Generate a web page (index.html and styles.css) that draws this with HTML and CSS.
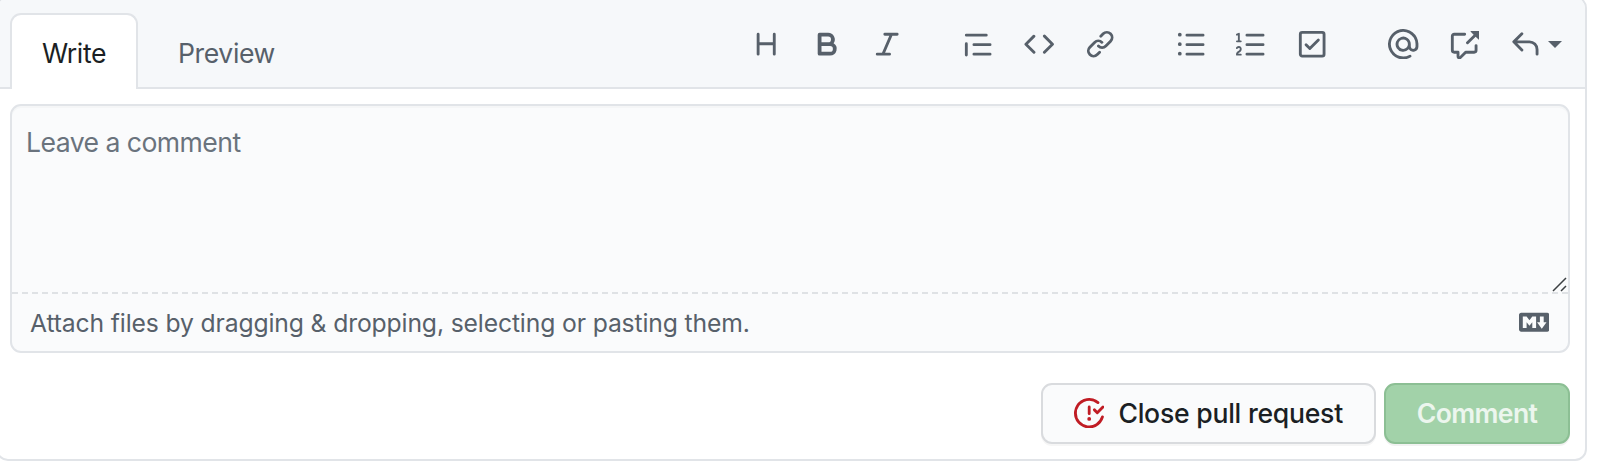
FILE: index.html
```html
<!DOCTYPE html>
<html lang="en">
<head>
<meta charset="utf-8">
<title>Leave a comment</title>
<link rel="stylesheet" href="styles.css">
</head>
<body>
<form class="comment-box">
  <header class="box-header">
    <nav class="tabs">
      <a class="tab tab-active"><span class="write-label">Write</span></a>
      <a class="tab"><span class="preview-label">Preview</span></a>
    </nav>
    <div class="toolbar">
      <div class="tool-group">
        <svg class="icon" viewBox="0 0 16 16"><path d="M3.75 2a.75.75 0 01.75.75V7h7V2.75a.75.75 0 011.5 0v10.5a.75.75 0 01-1.5 0V8.5h-7v4.75a.75.75 0 01-1.5 0V2.75A.75.75 0 013.75 2z"/></svg>
        <svg class="icon" viewBox="0 0 16 16"><path d="M4 2a1 1 0 00-1 1v10a1 1 0 001 1h5.5a3.5 3.5 0 001.852-6.47A3.5 3.5 0 008.5 2H4zm4.5 5a1.5 1.5 0 100-3H5v3h3.5zM5 9v3h4.5a1.5 1.5 0 000-3H5z"/></svg>
        <svg class="icon" viewBox="0 0 16 16"><path d="M6 2.75A.75.75 0 016.75 2h6.5a.75.75 0 010 1.5h-2.505l-3.858 9H9.25a.75.75 0 010 1.5h-6.5a.75.75 0 010-1.5h2.505l3.858-9H6.75A.75.75 0 016 2.75z"/></svg>
      </div>
      <div class="tool-group">
        <svg class="icon" viewBox="0 0 16 16"><path d="M1.75 2.5a.75.75 0 000 1.5h10.5a.75.75 0 000-1.5H1.75zm4 5a.75.75 0 000 1.5h8.5a.75.75 0 000-1.5h-8.5zm0 5a.75.75 0 000 1.5h8.5a.75.75 0 000-1.5h-8.5zM2.5 7.75a.75.75 0 00-1.5 0v6a.75.75 0 001.5 0v-6z"/></svg>
        <svg class="icon" viewBox="0 0 16 16"><path d="M4.72 3.22a.75.75 0 011.06 1.06L2.06 8l3.72 3.72a.75.75 0 11-1.06 1.06L.47 8.53a.75.75 0 010-1.06l4.25-4.25zm6.56 0a.75.75 0 10-1.06 1.06L13.94 8l-3.72 3.72a.75.75 0 101.06 1.06l4.25-4.25a.75.75 0 000-1.06l-4.25-4.25z"/></svg>
        <svg class="icon" viewBox="0 0 16 16"><path d="M7.775 3.275a.75.75 0 001.06 1.06l1.25-1.25a2 2 0 112.83 2.83l-2.5 2.5a2 2 0 01-2.83 0 .75.75 0 00-1.06 1.06 3.5 3.5 0 004.95 0l2.5-2.5a3.5 3.5 0 00-4.95-4.95l-1.25 1.25zm-4.69 9.64a2 2 0 010-2.83l2.5-2.5a2 2 0 012.83 0 .75.75 0 001.06-1.06 3.5 3.5 0 00-4.95 0l-2.5 2.5a3.5 3.5 0 004.95 4.95l1.25-1.25a.75.75 0 00-1.06-1.06l-1.25 1.25a2 2 0 01-2.83 0z"/></svg>
      </div>
      <div class="tool-group">
        <svg class="icon" viewBox="0 0 16 16"><path d="M2 4a1 1 0 100-2 1 1 0 000 2zm3.75-1.5a.75.75 0 000 1.5h8.5a.75.75 0 000-1.5h-8.5zm0 5a.75.75 0 000 1.5h8.5a.75.75 0 000-1.5h-8.5zm0 5a.75.75 0 000 1.5h8.5a.75.75 0 000-1.5h-8.5zM3 8a1 1 0 11-2 0 1 1 0 012 0zm-1 6a1 1 0 100-2 1 1 0 000 2z"/></svg>
        <svg class="icon" viewBox="0 0 16 16"><path d="M2.003 2.5a.5.5 0 00-.723-.447l-1.003.5a.5.5 0 00.446.895l.28-.14V6H.5a.5.5 0 000 1h2.006a.5.5 0 100-1h-.503V2.5zM5 3.25a.75.75 0 01.75-.75h8.5a.75.75 0 010 1.5h-8.5A.75.75 0 015 3.25zm0 5a.75.75 0 01.75-.75h8.5a.75.75 0 010 1.5h-8.5A.75.75 0 015 8.25zm0 5a.75.75 0 01.75-.75h8.5a.75.75 0 010 1.5h-8.5a.75.75 0 01-.75-.75zM.924 10.32l.003-.004a.851.851 0 01.144-.153A.66.66 0 011.5 10c.195 0 .306.068.374.146a.57.57 0 01.128.376c0 .453-.269.682-.8 1.078l-.035.025C.692 11.98 0 12.495 0 13.5a.5.5 0 00.5.5h2.003a.5.5 0 000-1H1.146c.132-.197.351-.372.654-.597l.047-.035c.47-.35 1.156-.858 1.156-1.845 0-.365-.118-.744-.377-1.038-.268-.303-.658-.484-1.126-.484-.48 0-.84.202-1.068.392a1.858 1.858 0 00-.348.384l-.007.011-.002.004-.001.002-.001.001a.5.5 0 00.851.525z"/></svg>
        <svg class="icon" viewBox="0 0 16 16"><path d="M2.5 2.75a.25.25 0 01.25-.25h10.5a.25.25 0 01.25.25v10.5a.25.25 0 01-.25.25H2.75a.25.25 0 01-.25-.25V2.75zM2.75 1A1.75 1.75 0 001 2.75v10.5c0 .966.784 1.75 1.75 1.75h10.5A1.75 1.75 0 0015 13.25V2.75A1.75 1.75 0 0013.25 1H2.75zm9.03 5.28a.75.75 0 00-1.06-1.06L6.75 9.19 5.28 7.72a.75.75 0 00-1.06 1.06l2 2a.75.75 0 001.06 0l4.5-4.5z"/></svg>
      </div>
      <div class="tool-group">
        <svg class="icon" viewBox="0 0 16 16"><path d="M4.75 2.37a6.5 6.5 0 006.5 11.26.75.75 0 01.75 1.298 8 8 0 113.994-7.273.754.754 0 01.006.095v1.5a2.75 2.75 0 01-5.072 1.475A4 4 0 1112 8v1.25a1.25 1.25 0 002.5 0V7.867a6.5 6.5 0 00-9.75-5.496V2.37zM10.5 8a2.5 2.5 0 10-5 0 2.5 2.5 0 005 0z"/></svg>
        <svg class="icon" viewBox="0 0 16 16"><path d="M16 1.25v4.146a.25.25 0 01-.427.177L14.03 4.03l-3.75 3.75a.75.75 0 11-1.06-1.06l3.75-3.75-1.543-1.543A.25.25 0 0111.604 1h4.146a.25.25 0 01.25.25zM2.75 3.5a.25.25 0 00-.25.25v7.5c0 .138.112.25.25.25h2a.75.75 0 01.75.75v2.19l2.72-2.72a.75.75 0 01.53-.22h4.5a.25.25 0 00.25-.25v-2.5a.75.75 0 111.5 0v2.5A1.75 1.75 0 0113.25 13H9.06l-2.573 2.573A1.457 1.457 0 014 14.543V13H2.75A1.75 1.75 0 011 11.25v-7.5C1 2.784 1.784 2 2.75 2h5.5a.75.75 0 010 1.5h-5.5z"/></svg>
        <div class="reply">
          <svg class="icon" viewBox="0 0 16 16"><path d="M6.78 1.97a.75.75 0 010 1.06L3.81 6h6.44A4.75 4.75 0 0115 10.75v2.5a.75.75 0 01-1.5 0v-2.5a3.25 3.25 0 00-3.25-3.25H3.81l2.97 2.97a.75.75 0 11-1.06 1.06L1.47 7.28a.75.75 0 010-1.06l4.25-4.25a.75.75 0 011.06 0z"/></svg>
          <span class="caret"></span>
        </div>
      </div>
    </div>
  </header>

  <div class="editor">
    <div class="input-area">
      <span class="placeholder">Leave a comment</span>
      <svg class="grip" viewBox="0 0 15 15"><path d="M1 14L14 1M9 14l5-5"/></svg>
    </div>
    <div class="attach">
      <span class="attach-text">Attach files by dragging &amp; dropping, selecting or pasting them.</span>
      <svg class="icon" viewBox="0 0 16 16"><path d="M14.85 3H1.15C.52 3 0 3.52 0 4.15v7.69C0 12.48.52 13 1.15 13h13.69c.64 0 1.15-.52 1.15-1.15v-7.7C16 3.52 15.48 3 14.85 3zM9 11H7V8L5.5 9.92 4 8v3H2V5h2l1.5 2L7 5h2v6zm2.99.5L9.5 8H11V5h2v3h1.5l-2.51 3.5z"/></svg>
    </div>
  </div>

  <footer class="actions">
    <button type="button" class="btn btn-close">
      <svg class="icon icon-danger" viewBox="0 0 16 16"><path d="M1.5 8a6.5 6.5 0 0110.65-5.003.75.75 0 00.959-1.153 8 8 0 102.592 8.33.75.75 0 10-1.444-.407A6.5 6.5 0 011.5 8zM8 12a1 1 0 100-2 1 1 0 000 2zm0-8a.75.75 0 01.75.75v3.5a.75.75 0 11-1.5 0v-3.5A.75.75 0 018 4zm4.78 4.28l3-3a.75.75 0 00-1.06-1.06l-2.47 2.47-.97-.97a.749.749 0 10-1.06 1.06l1.5 1.5a.75.75 0 001.06 0z"/></svg>
      <span class="close-label">Close pull request</span>
    </button>
    <button type="button" class="btn btn-comment"><span class="comment-label">Comment</span></button>
  </footer>
</form>
</body>
</html>
```
FILE: styles.css
```css
* { box-sizing: border-box; }

body {
  margin: 0;
  background: #fff;
  font-family: Inter, "Liberation Sans", sans-serif;
  font-size: 26.6px;
  line-height: 40px;
  color: #1b1f24;
  overflow: hidden;
}

.comment-box {
  width: 1591px;
  height: 465px;
  margin: -4px 0 0 -4px;
  border: 2px solid #e1e4e8;
  border-radius: 12px;
  display: flex;
  flex-direction: column;
}

.box-header {
  height: 91px;
  flex: none;
  display: flex;
  justify-content: space-between;
  padding: 15px 23px 0 12px;
  background: #f6f8fa;
  border-bottom: 2px solid #e1e4e8;
  border-radius: 10px 10px 0 0;
}

.tabs { display: flex; height: 76px; }

.tab {
  display: flex;
  align-items: center;
  padding: 3px 40px 0;
  color: #57606a;
  white-space: nowrap;
}

.tab-active {
  width: 128px;
  padding: 1px 0 0;
  justify-content: center;
  background: #fff;
  border: 2px solid #e1e4e8;
  border-bottom: 0;
  border-radius: 11px 11px 0 0;
  color: #1b1f24;
}

.toolbar { display: flex; gap: 60.7px; height: 62px; align-items: center; }
.tool-group { display: flex; gap: 30.3px; }
.reply { display: flex; align-items: center; gap: 8px; }

.icon {
  display: block;
  width: 30.4px;
  height: 30.4px;
  flex: none;
  fill: #57606a;
  fill-rule: evenodd;
}

.caret {
  margin-top: 2px;
  border: 7.6px solid transparent;
  border-top-color: #57606a;
  border-bottom: 0;
}

.editor {
  height: 249px;
  margin: 15px 15px 0 12px;
  flex: none;
  background: #fafbfc;
  border: 2px solid #e1e4e8;
  border-radius: 11px;
  box-shadow: inset 0 2px 0 rgba(225, 228, 232, 0.2);
}

.input-area {
  height: 186px;
  display: flex;
  justify-content: space-between;
  padding: 16px 1px 0 14px;
}

.placeholder { color: #6a737d; white-space: nowrap; }

.grip {
  width: 15px;
  height: 15px;
  align-self: flex-end;
  fill: none;
  stroke: #3c4043;
  stroke-width: 1.5;
}

.attach {
  height: 59px;
  display: flex;
  justify-content: space-between;
  align-items: center;
  padding: 0 19px 0 18px;
  border-top: 2px dashed #dfe2e5;
  font-size: 24.7px;
  color: #57606a;
  white-space: nowrap;
}

.actions {
  display: flex;
  justify-content: flex-end;
  gap: 8px;
  padding: 30px 15px 0 0;
}

.btn {
  height: 61px;
  display: flex;
  align-items: center;
  justify-content: center;
  border-radius: 11px;
  font: 500 26.6px/40px Inter, "Liberation Sans", sans-serif;
  padding: 0 0 1px;
  white-space: nowrap;
}

.btn-close {
  width: 335px;
  gap: 14px;
  background: #fafbfc;
  border: 2px solid #d9dbde;
  color: #1b1f24;
  box-shadow: 0 2px 0 rgba(27, 31, 36, 0.04);
}

.icon-danger { fill: #c01c24; }

.btn-comment {
  width: 186px;
  background: #a2d2a9;
  border: 2px solid #8cbf94;
  color: #ecf6ee;
  font-weight: 600;
  box-shadow: 0 2px 0 rgba(27, 31, 36, 0.06);
}

.write-label, .preview-label { letter-spacing: -0.4px; }
.placeholder { letter-spacing: -0.55px; }
.attach-text { letter-spacing: -0.13px; }
.close-label { letter-spacing: -0.25px; }
.comment-label { letter-spacing: -0.65px; }
```
